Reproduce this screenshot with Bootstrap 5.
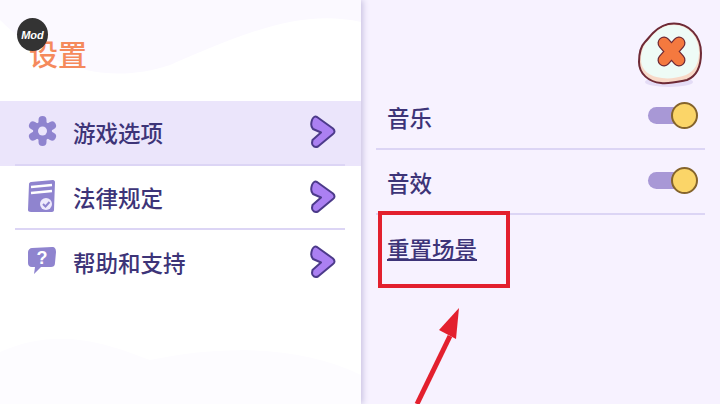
<!DOCTYPE html>
<html lang="zh-CN">
<head>
  <meta charset="UTF-8">
  <title>设置</title>
  <link href="https://cdn.jsdelivr.net/npm/bootstrap@5.3.0/dist/css/bootstrap.min.css" rel="stylesheet" />
  <style>
    html, body { height: 404px; overflow: hidden; }
    body { font-family: "Noto Sans CJK SC", "Liberation Sans", sans-serif; color: #3d3478; background: #f7f2ff; }
    .stage { width: 720px; height: 404px; position: relative; }
    .side-panel { width: 361px; background: #fff; box-shadow: 2px 0 6px #c9c2e2; position: relative; z-index: 1; }
    .side-bg { position: absolute; left: 0; top: 0; width: 361px; height: 404px; }
    .side-inner { position: relative; }
    .side-title { color: #f58a5c; font-size: 29px; line-height: 40px; height: 101px; padding: 33px 0 0 29px; font-weight: 500; }
    .menu-row { height: 64.5px; padding-left: 15px; padding-right: 16px; }
    .menu-row.on { background: #ebe5fb; }
    .menu-in { height: 100%; border-bottom: 2px solid #dcd5f5; padding-left: 11px; padding-right: 9px; }
    .menu-row:last-child .menu-in { border-bottom: 0; }
    .menu-icon { width: 32px; height: 36px; }
    .menu-label { font-size: 22.5px; margin-left: 15px; padding-top: 2px; font-weight: 500; }
    .chev { width: 26px; height: 34px; }
    .main-panel { padding: 85px 15px 0; position: relative; }
    .set-row { height: 65px; border-bottom: 2px solid #dcd5f5; padding: 2px 0 0 11px; font-size: 22.5px; font-weight: 500; }
    .set-row.plain { border: 0; }
    .set-link { color: #3d3478; font-size: 22.5px; font-weight: 500; text-decoration: underline; text-decoration-thickness: 2px; }
    .toggle-wrap { width: 50px; height: 28px; margin: -4px 7px 0 0; position: relative; }
    .toggle-track { position: absolute; left: 0; top: 5px; width: 36px; height: 17px; border-radius: 9px; background: #a898d6; }
    .toggle-knob { position: absolute; right: 0; top: 0; width: 27px; height: 27px; border-radius: 50%; background: #fbd568; border: 2px solid #85642c; }
    .close-btn { position: absolute; left: 637px; top: 22px; width: 66px; height: 68px; z-index: 2; }
    .mod-badge { position: absolute; left: 17px; top: 18px; width: 31px; height: 33px; border-radius: 50%; background: #333; color: #fff; font: italic 700 11px "Liberation Sans", sans-serif; z-index: 3; }
    .red-box { position: absolute; left: 378px; top: 211px; width: 132px; height: 77px; border: 4px solid #e3202e; z-index: 2; }
    .red-arrow { position: absolute; left: 400px; top: 300px; width: 70px; height: 104px; z-index: 2; }
  </style>
</head>
<body>
  <div class="stage d-flex">

    <!-- left menu -->
    <div class="side-panel flex-shrink-0">
      <svg class="side-bg" viewBox="0 0 361 404">
        <path d="M0 0H361V22C300 8 240 35 170 65C110 85 50 70 0 20Z" fill="#fbf9ff"/>
        <path d="M0 352C60 325 110 345 150 360C220 345 300 345 361 375V404H0Z" fill="#fdfcff"/>
      </svg>
      <div class="side-inner">
        <div class="side-title">设置</div>

        <div class="menu-row on">
          <div class="menu-in d-flex align-items-center">
            <svg class="menu-icon" viewBox="0 0 32 36">
              <g stroke="#8f84cf" stroke-width="8" stroke-linecap="round">
                <path d="M16.500 6V28M7 11.500L26 22.500M7 22.500L26 11.500"/>
              </g>
              <circle cx="16.500" cy="17" r="9.500" fill="#8f84cf"/>
              <circle cx="16.500" cy="17" r="4.500" fill="#ebe5fb"/>
            </svg>
            <span class="menu-label flex-grow-1">游戏选项</span>
            <svg class="chev" viewBox="0 0 26 34"><path d="M7 2L23 13.500C25 15.500 25 17.500 23 19L8 31.500C5 33 2 31 2 28L2.500 25 11 17.500 3 14C1 12 1 8 2 5 3 2 5 1 7 2z" fill="#ab80f2" stroke="#4c3a8a" stroke-width="2" stroke-linejoin="round"/></svg>
          </div>
        </div>

        <div class="menu-row">
          <div class="menu-in d-flex align-items-center">
            <svg class="menu-icon" viewBox="0 0 32 36">
              <path d="M5 3l22-2c1 0 2 1 2 2l-1 28c0 1-1 2-2 2H5c-2 0-3-1-3-2L3 5c0-1 1-2 2-2z" fill="#8f84cf"/>
              <path d="M5 8l21-2M5 14l21-2" stroke="#fff" stroke-width="2.500" fill="none"/>
              <circle cx="20" cy="25" r="6" fill="#efeafc"/>
              <path d="M17 25l2.500 2.500 4-4.500" stroke="#8f84cf" stroke-width="2" fill="none"/>
            </svg>
            <span class="menu-label flex-grow-1">法律规定</span>
            <svg class="chev" viewBox="0 0 26 34"><path d="M7 2L23 13.500C25 15.500 25 17.500 23 19L8 31.500C5 33 2 31 2 28L2.500 25 11 17.500 3 14C1 12 1 8 2 5 3 2 5 1 7 2z" fill="#ab80f2" stroke="#4c3a8a" stroke-width="2" stroke-linejoin="round"/></svg>
          </div>
        </div>

        <div class="menu-row">
          <div class="menu-in d-flex align-items-center">
            <svg class="menu-icon" viewBox="0 0 32 36">
              <path d="M6 4l20-1c3 0 4 2 4 5l-1 11c0 3-2 4-4 4H15l-7 7 1-7H6c-3 0-4-2-4-4L2 8c0-2 2-4 4-4z" fill="#8f84cf"/>
              <text x="16" y="20" text-anchor="middle" font-family="Liberation Sans" font-weight="700" font-size="18" fill="#fff">?</text>
            </svg>
            <span class="menu-label flex-grow-1">帮助和支持</span>
            <svg class="chev" viewBox="0 0 26 34"><path d="M7 2L23 13.500C25 15.500 25 17.500 23 19L8 31.500C5 33 2 31 2 28L2.500 25 11 17.500 3 14C1 12 1 8 2 5 3 2 5 1 7 2z" fill="#ab80f2" stroke="#4c3a8a" stroke-width="2" stroke-linejoin="round"/></svg>
          </div>
        </div>
      </div>
    </div>

    <!-- right settings -->
    <div class="main-panel flex-grow-1">
      <div class="set-row d-flex align-items-center justify-content-between">
        <span>音乐</span>
        <div class="toggle-wrap"><div class="toggle-track"></div><div class="toggle-knob"></div></div>
      </div>
      <div class="set-row d-flex align-items-center justify-content-between">
        <span>音效</span>
        <div class="toggle-wrap"><div class="toggle-track"></div><div class="toggle-knob"></div></div>
      </div>
      <div class="set-row plain d-flex align-items-center">
        <a class="set-link" href="#">重置场景</a>
      </div>
    </div>

    <!-- overlays -->
    <div class="mod-badge d-flex align-items-center justify-content-center">Mod</div>
    <svg class="close-btn" viewBox="0 0 66 68">
      <ellipse cx="32" cy="60" rx="24" ry="5" fill="#e4dcf6"/>
      <path d="M16 11C22 5 28 1.500 37 1.500C52 1.500 64 14 64 31C64 44 60 54 50 58C40 60 32 62 24 61C12 60 2 52 2 40C2 31 4 24 8 20C11 17 13 14 16 11z" fill="#f8d9c8" stroke="#6e2a36" stroke-width="2"/>
      <path d="M17 12C23 6 29 3 37 3C51 3 62 15 62 30C62 41 58 49 49 53C40 56 32 57 25 56C13 55 4 48 4 38C4 31 6 25 9 21C12 18 14 15 17 12z" fill="#eefbf6"/>
      <g stroke-linecap="round">
        <path d="M27 21L42 38M42 21L27 38" stroke="#6e2a36" stroke-width="13"/>
        <path d="M27 21L42 38M42 21L27 38" stroke="#f4793f" stroke-width="10.500"/>
      </g>
    </svg>
    <div class="red-box"></div>
    <svg class="red-arrow" viewBox="0 0 70 104">
      <path d="M17 104L50 36" stroke="#e3202e" stroke-width="5"/>
      <path d="M59 8L56 39 39 30z" fill="#e3202e"/>
    </svg>

  </div>
  <script src="https://cdn.jsdelivr.net/npm/bootstrap@5.3.0/dist/js/bootstrap.bundle.min.js"></script>
</body>
</html>
